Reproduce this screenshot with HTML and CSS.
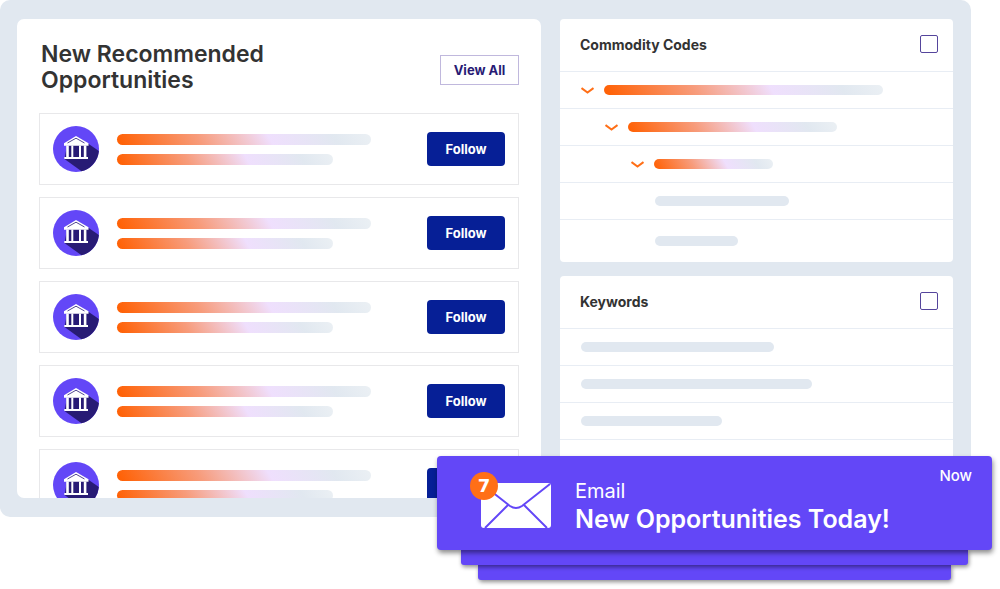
FILE: index.html
```
<!DOCTYPE html>
<html lang="en">
<head>
  <meta charset="UTF-8">
  <meta name="viewport" content="width=device-width, initial-scale=1.0">
  <title>New Recommended Opportunities</title>
  <link rel="stylesheet" href="styles.css">
</head>
<body>
  <svg class="sprite" aria-hidden="true">
    <symbol id="bank" viewBox="0 0 46 46">
      <circle cx="23" cy="23" r="23" fill="#6347f7"/>
      <path d="M35 17.500L45.900 25A23 23 0 0 1 28.500 45.300L11.500 33L14 19.500Z" fill="#281b75"/>
      <path d="M23 10L35.500 17.300V19.700H11V17.300Z" fill="#fff"/>
      <path d="M14.500 17L23 12.200L31.500 17" fill="none" stroke="#281b75" stroke-width="0.800"/>
      <path d="M13.200 19.500h2.600V31.500h-2.600zM18.300 19.500h2V31.500h-2zM26 19.500h2V31.500h-2zM30.800 19.500h2.600V31.500H30.800zM11.300 31h23.700v2H11.300z" fill="#fff"/>
    </symbol>
    <symbol id="chevron" viewBox="0 0 13 7">
      <path d="M0.500 1L6.500 5.500L12.500 1" fill="none" stroke="#ff6f17" stroke-width="2"/>
    </symbol>
  </svg>

  <div class="hero">
    <main class="board">
      <section class="panel opportunities">
        <header class="opportunities-header">
          <h1>New Recommended Opportunities</h1>
          <button type="button" class="view-all">View All</button>
        </header>
        <div class="card">
          <svg class="avatar"><use href="#bank"/></svg>
          <div class="lines"><div class="line fade"></div><div class="line fade short"></div></div>
          <button type="button" class="follow">Follow</button>
        </div>
        <div class="card">
          <svg class="avatar"><use href="#bank"/></svg>
          <div class="lines"><div class="line fade"></div><div class="line fade short"></div></div>
          <button type="button" class="follow">Follow</button>
        </div>
        <div class="card">
          <svg class="avatar"><use href="#bank"/></svg>
          <div class="lines"><div class="line fade"></div><div class="line fade short"></div></div>
          <button type="button" class="follow">Follow</button>
        </div>
        <div class="card">
          <svg class="avatar"><use href="#bank"/></svg>
          <div class="lines"><div class="line fade"></div><div class="line fade short"></div></div>
          <button type="button" class="follow">Follow</button>
        </div>
        <div class="card">
          <svg class="avatar"><use href="#bank"/></svg>
          <div class="lines"><div class="line fade"></div><div class="line fade short"></div></div>
          <button type="button" class="follow" aria-label="Follow"></button>
        </div>
      </section>

      <div class="sidebar">
        <section class="panel">
          <div class="filter-header">
            <label for="codes">Commodity Codes</label>
            <input type="checkbox" id="codes">
          </div>
          <div class="row level-1"><svg class="chevron"><use href="#chevron"/></svg><div class="bar fade"></div></div>
          <div class="row level-2"><svg class="chevron"><use href="#chevron"/></svg><div class="bar fade"></div></div>
          <div class="row level-3"><svg class="chevron"><use href="#chevron"/></svg><div class="bar fade"></div></div>
          <div class="row level-4"><div class="bar"></div></div>
          <div class="row level-4 last"><div class="bar"></div></div>
        </section>
        <section class="panel keywords">
          <div class="filter-header">
            <label for="keywords">Keywords</label>
            <input type="checkbox" id="keywords">
          </div>
          <div class="row"><div class="bar medium"></div></div>
          <div class="row"><div class="bar long"></div></div>
          <div class="row"><div class="bar small"></div></div>
          <div class="row"></div>
        </section>
      </div>
    </main>

    <aside class="toast-stack">
      <div class="toast">
        <div class="mail">
          <svg class="envelope" viewBox="0 0 70 45" aria-hidden="true">
            <rect width="70" height="45" rx="3" fill="#fff"/>
            <path d="M1 1L29 23Q35 27 41 23L69 1M27.500 21.500L4 45M42.500 21.500L66 45" fill="none" stroke="#6347f7" stroke-width="2"/>
          </svg>
          <span class="badge">7</span>
        </div>
        <div class="message">
          <p class="source">Email</p>
          <p class="title">New Opportunities Today!</p>
        </div>
        <span class="time">Now</span>
      </div>
      <div class="toast-under"></div>
      <div class="toast-under last"></div>
    </aside>
  </div>
</body>
</html>
```
FILE: styles.css
```
* {
  box-sizing: border-box;
}
body {
  margin: 0;
  background: #fff;
  color: #333;
  font-family: Inter, sans-serif;
}
h1, p {
  margin: 0;
}
button {
  font-family: inherit;
  cursor: pointer;
}
.sprite {
  position: absolute;
  width: 0;
  height: 0;
}
.hero {
  position: relative;
  padding: 0 29px 72px 0;
}

/* board */
.board {
  display: grid;
  grid-template-columns: 4fr 3fr;
  gap: 19px;
  padding: 19px 18px 19px 17px;
  background: #e1e8f0;
  border-radius: 10px;
}
.panel {
  background: #fff;
  border-radius: 4px;
}

/* opportunities: as tall as the sidebar, the rest is cut off */
.opportunities {
  height: 0;
  min-height: 100%;
  overflow: hidden;
  padding: 22px 22px 0;
  border-radius: 7px;
}
.opportunities-header {
  display: flex;
  justify-content: space-between;
  align-items: flex-start;
  margin-bottom: 20px;
  padding-left: 2px;
}
h1 {
  max-width: 260px;
  font-size: 23px;
  line-height: 26px;
  font-weight: 600;
}
.view-all {
  width: 79px;
  height: 30px;
  margin-top: 14px;
  padding: 0;
  border: 1px solid #c0b8dd;
  background: #fff;
  color: #281b75;
  font-size: 13px;
  font-weight: 700;
}
.card {
  display: flex;
  align-items: center;
  gap: 18px;
  height: 72px;
  margin-bottom: 12px;
  padding: 0 13px;
  border: 1px solid #e8e8ea;
}
.avatar {
  flex: none;
  width: 46px;
  height: 46px;
}
.lines {
  flex: 1;
}
.line {
  width: 87%;
  height: 11px;
  border-radius: 6px;
}
.line.short {
  width: 74%;
  margin-top: 9px;
}
.fade {
  background: linear-gradient(60deg, #ff6207 2%, #f79c7c 33%, #efdffd 60%, #e1e8f0 85%, #ebf0f4);
}
.follow {
  width: 78px;
  height: 34px;
  padding: 0;
  border: none;
  border-radius: 4px;
  background: #061f96;
  color: #fff;
  font-size: 13px;
  font-weight: 700;
}

/* sidebar */
.sidebar {
  display: flex;
  flex-direction: column;
  gap: 14px;
}
.filter-header {
  display: flex;
  justify-content: space-between;
  align-items: center;
  height: 52px;
  padding: 0 15px 2px 20px;
  font-size: 14px;
  font-weight: 700;
}
.filter-header input {
  appearance: none;
  width: 18px;
  height: 18px;
  margin: 0;
  border: 1px solid #55459c;
  border-radius: 2px;
}
.row {
  display: flex;
  align-items: center;
  gap: 10px;
  height: 37px;
  padding-left: 21px;
  border-top: 1px solid #e8edf4;
}
.row.last {
  height: 43px;
}
.chevron {
  flex: none;
  width: 13px;
  height: 7px;
}
.bar {
  height: 10px;
  border-radius: 5px;
}
.bar:not(.fade) {
  background: #e1e8f0;
}
.level-1 .bar {
  width: 75%;
}
.level-2 {
  padding-left: 45px;
}
.level-2 .bar {
  width: 60%;
}
.level-3 {
  padding-left: 71px;
}
.level-3 .bar {
  width: 37%;
}
.level-4 {
  padding-left: 95px;
}
.level-4 .bar {
  width: 45%;
}
.level-4.last .bar {
  width: 28%;
}
.keywords {
  padding-bottom: 22px;
}
.bar.medium {
  width: 52%;
}
.bar.long {
  width: 62%;
}
.bar.small {
  width: 38%;
}

/* notification over the board */
.toast-stack {
  position: absolute;
  top: 456px;
  left: 437px;
  right: 8px;
}
.toast {
  position: relative;
  z-index: 2;
  display: flex;
  align-items: center;
  gap: 24px;
  height: 94px;
  padding: 4px 20px 0 44px;
  border-radius: 4px;
  background: #6347f7;
  color: #fff;
  box-shadow: 1px 3px 5px rgba(0, 0, 0, 0.45);
}
.mail {
  position: relative;
  height: 45px;
}
.envelope {
  display: block;
  width: 70px;
  height: 45px;
}
.badge {
  position: absolute;
  top: -11px;
  left: -11px;
  width: 28px;
  height: 28px;
  border-radius: 50%;
  background: #ff6f17;
  font: bold 18px/28px "DejaVu Sans", sans-serif;
  text-align: center;
}
.message {
  flex: 1;
  line-height: 28px;
}
.source {
  font-size: 20px;
}
.title {
  font-size: 25px;
  font-weight: 600;
}
.time {
  align-self: flex-start;
  margin-top: 6px;
  font-size: 15px;
  font-weight: 500;
}
.toast-under {
  position: relative;
  z-index: 1;
  height: 15px;
  margin: 0 24px;
  border-radius: 0 0 3px 3px;
  background: #6347f7;
  box-shadow: 1px 2px 4px rgba(0, 0, 0, 0.45);
}
.toast-under.last {
  z-index: 0;
  margin: 0 41px;
}
```
